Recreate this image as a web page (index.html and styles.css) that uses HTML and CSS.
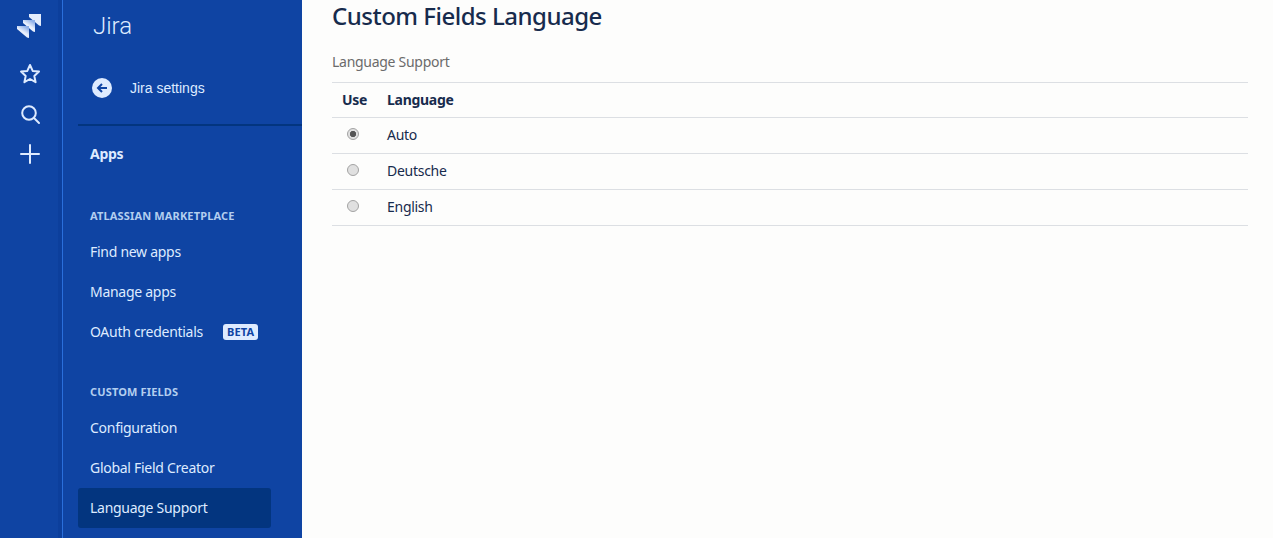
FILE: index.html
```html
<!DOCTYPE html>
<html lang="en">
<head>
<meta charset="utf-8">
<title>Custom Fields Language</title>
<link rel="stylesheet" href="styles.css">
</head>
<body>
<div class="app">
  <nav class="rail">
    <svg class="logo" width="26" height="26" viewBox="0 0 26 26">
      <defs>
        <linearGradient id="g" x1="0.7" y1="0.05" x2="0.45" y2="0.45"><stop offset="0" stop-color="#8fb0e8"/><stop offset="1" stop-color="#e9f0fd"/></linearGradient>
      </defs>
      <path fill="#e4edfc" d="M13 1h12v12l-2-.5L13 4z"/>
      <path fill="url(#g)" d="M7 7h12v12l-2-.5L7 10z"/>
      <path fill="url(#g)" d="M1 13h12v12l-2-.5L1 16z"/>
    </svg>
    <svg class="rail-icon star" width="24" height="24" viewBox="0 0 24 24"><path fill="none" stroke="#deebff" stroke-width="2" stroke-linejoin="round" d="M12 3l2.700 5.900 6.300.7-4.700 4.300 1.300 6.300L12 17l-5.600 3.200 1.300-6.300L3 9.600l6.300-.7z"/></svg>
    <svg class="rail-icon" width="24" height="24" viewBox="0 0 24 24"><circle cx="11" cy="11" r="6.800" fill="none" stroke="#deebff" stroke-width="2"/><path d="M16 16l5 5" stroke="#deebff" stroke-width="2" stroke-linecap="round"/></svg>
    <svg class="rail-icon" width="24" height="24" viewBox="0 0 24 24"><path d="M12 3v18M3 12h18" stroke="#deebff" stroke-width="2" stroke-linecap="round"/></svg>
  </nav>
  <aside class="side">
    <div class="brand">Jira</div>
    <a class="back">
      <svg width="20" height="20" viewBox="0 0 20 20"><circle cx="10" cy="10" r="10" fill="#deebff"/><path d="M15 10H6.500M10 6l-4 4 4 4" fill="none" stroke="#0f44a3" stroke-width="2"/></svg>
      <span>Jira settings</span>
    </a>
    <div class="side-body">
      <div class="apps">Apps</div>
      <div class="group">Atlassian Marketplace</div>
      <a class="item">Find new apps</a>
      <a class="item">Manage apps</a>
      <a class="item">OAuth credentials <span class="beta">BETA</span></a>
      <div class="group second">Custom Fields</div>
      <a class="item">Configuration</a>
      <a class="item">Global Field Creator</a>
      <a class="item current">Language Support</a>
    </div>
  </aside>
  <main class="main">
    <h1>Custom Fields Language</h1>
    <p class="crumb">Language Support</p>
    <table class="langs">
      <thead><tr><th class="use">Use</th><th>Language</th></tr></thead>
      <tbody>
        <tr><td class="use"><input type="radio" name="l" checked></td><td>Auto</td></tr>
        <tr><td class="use"><input type="radio" name="l"></td><td>Deutsche</td></tr>
        <tr><td class="use"><input type="radio" name="l"></td><td>English</td></tr>
      </tbody>
    </table>
  </main>
</div>
</body>
</html>
```
FILE: styles.css
```css
* { box-sizing: border-box; }
html, body { margin: 0; height: 100%; overflow: hidden; }
body { background: #fdfdfc; color: #172b4d; font-family: "Noto Sans", sans-serif; font-size: 14px; letter-spacing: -0.28px; }
.app { display: flex; height: 538px; }
.rail { width: 63px; flex: none; background: linear-gradient(to right, #0f44a3 58px, #0c3f9c 58px, #0c3f9c 62px, #2a6fdb 62px); display: flex; flex-direction: column; align-items: center; padding: 13px 0 0 0; }
.logo { display: block; margin-left: -6px; }
.rail-icon { display: block; margin-top: 16px; margin-right: 3px; }
.rail-icon.star { margin-top: 23px; }
.rail-icon.star + .rail-icon { margin-right: 4px; }
.side { width: 239px; flex: none; background: #0f44a3; color: #deebff; }
.brand { font-family: Roboto, sans-serif; font-weight: 300; font-size: 24px; line-height: 30px; padding: 11px 0 0 30px; letter-spacing: 0; }
.back { display: flex; align-items: center; gap: 18px; height: 40px; margin-top: 27px; padding-left: 29px; font-family: "Liberation Sans", sans-serif; font-size: 14px; letter-spacing: 0; }
.side-body { margin: 16px 0 0 15px; border-top: 2px solid #03357f; padding-top: 12px; }
.apps { font-weight: 700; line-height: 32px; padding-left: 12px; }
.group { font-size: 11px; font-weight: 700; text-transform: uppercase; color: #b3ceef; line-height: 16px; padding-left: 12px; margin-top: 38px; margin-bottom: 8px; letter-spacing: 0.15px; }
.group.second { margin-top: 32px; }
.item { display: flex; align-items: center; height: 40px; width: 193px; padding: 0 0 2px 12px; border-radius: 3px; color: #deebff; }
.item.current { background: #03357f; }
.beta { margin: 2px 0 0 20px; background: #deebff; color: #0f44a3; font-size: 11px; font-weight: 700; line-height: 16px; padding: 0 4px; border-radius: 3px; letter-spacing: 0.2px; }
.main { flex: 1; padding: 0 25px 0 30px; }
h1 { margin: 0; font-size: 24px; font-weight: 500; line-height: 32px; color: #172b4d; letter-spacing: -0.5px; }
.crumb { margin: 20px 0 0; color: #6b6b6b; line-height: 20px; }
.langs { margin-top: 10px; width: 100%; border-collapse: collapse; }
.langs th, .langs td { text-align: left; height: 36px; padding: 0 0 2px 10px; border-bottom: 1px solid #dcdfe3; }
.langs thead tr { border-top: 1px solid #dcdfe3; }
.langs th { height: 35px; font-weight: 700; }
.langs .use { width: 45px; }
.langs input { appearance: none; display: block; width: 12px; height: 12px; margin: 0 0 2px 5px; border-radius: 50%; border: 1px solid #a3a3a3; background: #e0e0e0; }
.langs input:checked { background: radial-gradient(circle, #555 0 2.8px, #e0e0e0 3.5px); }
```
